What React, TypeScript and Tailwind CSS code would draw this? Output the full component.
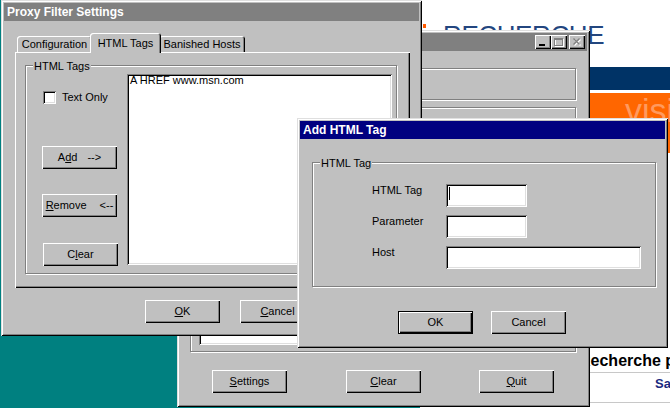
import React from "react";

// win95 bevels
const win =
  "bg-[#c0c0c0] shadow-[inset_1px_1px_#dfdfdf,inset_-1px_-1px_#000,inset_2px_2px_#fff,inset_-2px_-2px_#808080]";
const raised =
  "bg-[#c0c0c0] shadow-[inset_1px_1px_#fff,inset_-1px_-1px_#000,inset_-2px_-2px_#808080]";
const defaultBtn =
  "border border-black bg-[#c0c0c0] shadow-[inset_1px_1px_#fff,inset_-1px_-1px_#000,inset_-2px_-2px_#808080]";
const sunken =
  "bg-white shadow-[inset_1px_1px_#808080,inset_-1px_-1px_#fff,inset_2px_2px_#000,inset_-2px_-2px_#dfdfdf]";
const etched = "border border-[#808080] shadow-[inset_1px_1px_#fff,1px_1px_#fff]";

function U({ children }: { children: React.ReactNode }) {
  return <span className="underline decoration-1 underline-offset-[1px]">{children}</span>;
}

function Button({
  children,
  primary = false,
  className = "",
}: {
  children: React.ReactNode;
  primary?: boolean;
  className?: string;
}) {
  return (
    <div
      className={`flex h-[23px] w-[75px] shrink-0 items-center justify-center whitespace-pre text-[11px] leading-[13px] ${
        primary ? defaultBtn : raised
      } ${className}`}
    >
      {children}
    </div>
  );
}

function TitleBar({
  title,
  active = false,
  children,
}: {
  title: string;
  active?: boolean;
  children?: React.ReactNode;
}) {
  return (
    <div
      className={`flex h-[18px] items-center justify-between pl-[3px] pr-[2px] ${
        active ? "bg-[#000080]" : "bg-[#808080]"
      }`}
    >
      <span className="text-[12px] font-bold leading-[14px] text-white">{title}</span>
      {children}
    </div>
  );
}

function GroupBox({
  label,
  className = "",
  children,
}: {
  label: string;
  className?: string;
  children?: React.ReactNode;
}) {
  return (
    <div className={`relative ${etched} ${className}`}>
      <span className="absolute left-[7px] top-[-6px] bg-[#c0c0c0] px-[1px] text-[11px] leading-[13px]">
        {label}
      </span>
      {children}
    </div>
  );
}

function Tab({
  children,
  selected = false,
  className = "",
}: {
  children: React.ReactNode;
  selected?: boolean;
  className?: string;
}) {
  return (
    <div
      className={`flex items-center justify-center rounded-t-[3px] bg-[#c0c0c0] text-[11px] leading-[13px] shadow-[inset_1px_1px_#fff,inset_-1px_0_#000,inset_-2px_0_#808080] ${
        selected ? "relative z-10 -mx-[2px] -mb-[1px] h-[20px]" : "h-[16px]"
      } ${className}`}
    >
      {children}
    </div>
  );
}

function FieldRow({ label, width, cursor = false }: { label: string; width: string; cursor?: boolean }) {
  return (
    <div className="flex items-start">
      <span className="w-[74px] text-[11px] leading-[13px]">{label}</span>
      <div className={`flex h-[23px] items-start pl-[3px] pt-[3px] ${width} ${sunken}`}>
        {cursor && <span className="h-[13px] w-px bg-black" />}
      </div>
    </div>
  );
}

function CaptionButtons() {
  return (
    <div className="flex items-center">
      <div className={`flex h-[14px] w-[16px] items-end pb-[3px] pl-[4px] ${raised}`}>
        <span className="h-[2px] w-[6px] bg-black" />
      </div>
      <div className={`flex h-[14px] w-[16px] items-center justify-center ${raised}`}>
        <svg width="10" height="9" viewBox="0 0 10 9">
          <rect x="1.5" y="1.5" width="8" height="7" fill="none" stroke="#fff" />
          <rect x="0.5" y="0.5" width="8" height="7" fill="none" stroke="#808080" />
          <rect x="0" y="0" width="9" height="2" fill="#808080" />
        </svg>
      </div>
      <div className={`ml-[2px] flex h-[14px] w-[16px] items-center justify-center ${raised}`}>
        <svg width="9" height="8" viewBox="0 0 9 8">
          <path d="M1.5 1.5 L7.5 7.5 M7.5 1.5 L1.5 7.5" stroke="#fff" strokeWidth="1.4" />
          <path d="M0.5 0.5 L6.5 6.5 M6.5 0.5 L0.5 6.5" stroke="#808080" strokeWidth="1.4" />
        </svg>
      </div>
    </div>
  );
}

function WebPage() {
  return (
    <div className="absolute left-[420px] top-0 flex h-[408px] w-[250px] flex-col overflow-hidden bg-white">
      <div className="flex h-[67px] items-start pl-[3px] pt-[22px]">
        <span className="mt-[2px] h-[4px] w-[3px] bg-[#ff5a00]" />
        <span className="ml-[17px] whitespace-nowrap text-[26px] leading-none tracking-[-0.4px] text-[#23467f]">
          RECHERCHE
        </span>
      </div>
      <div className="h-[23px] bg-[#003366]" />
      <div className="h-[3px]" />
      <div className="h-[60px] overflow-hidden whitespace-nowrap bg-[#ff6600] pl-[205px] text-[34px] leading-none text-[#ff9a5e]">
        visitez
      </div>
      <div className="mt-auto h-[57px] whitespace-nowrap pl-[159px]">
        <div className="h-[22px] border-b border-[#c8c8c8] text-[16px] font-bold leading-[20px] text-black">
          Recherche par mot-clé
        </div>
        <div className="h-[30px] border-b border-[#c8c8c8] pl-[76px] pt-[3px] text-[13px] font-bold leading-[16px] text-[#1a2a80]">
          Saisissez
        </div>
      </div>
    </div>
  );
}

function BackWindow() {
  return (
    <div className={`absolute left-[177px] top-[30px] h-[377px] w-[413px] p-[3px] ${win}`}>
      <TitleBar title="">
        <CaptionButtons />
      </TitleBar>
      <div className="pl-[10px] pr-[11px] pt-[17px]">
        <div className={`h-[32px] ${etched}`} />
        <div className={`mt-[7px] flex h-[245px] flex-col justify-end pb-[6px] pl-[8px] pr-[7px] ${etched}`}>
          <div className={`h-[190px] ${sunken}`} />
        </div>
        <div className="mt-[18px] flex pl-[22px]">
          <Button>
            <U>S</U>ettings
          </Button>
          <Button className="ml-[59px]">
            <U>C</U>lear
          </Button>
          <Button className="ml-[58px]">
            <U>Q</U>uit
          </Button>
        </div>
      </div>
    </div>
  );
}

function ProxySettings() {
  return (
    <div className={`absolute left-[1px] top-0 h-[336px] w-[421px] p-[3px] ${win}`}>
      <TitleBar title="Proxy Filter Settings" />
      <div className="pl-[11px] pt-[12px]">
        <div className="flex h-[19px] items-end pl-[2px]">
          <Tab className="w-[75px]">Configuration</Tab>
          <Tab selected className="w-[71px]">
            HTML Tags
          </Tab>
          <Tab className="w-[86px]">Banished Hosts</Tab>
        </div>
        <div className={`h-[236px] w-[395px] pl-[10px] pt-[13px] ${raised}`}>
          <GroupBox label="HTML Tags" className="flex h-[209px] w-[372px] pt-[8px]">
            <div className="flex w-[101px] shrink-0 flex-col items-start pl-[16px]">
              <div className="ml-[1px] mt-[17px] flex h-[13px] items-center">
                <span className={`h-[13px] w-[13px] ${sunken}`} />
                <span className="ml-[6px] text-[11px] leading-[13px]">Text Only</span>
              </div>
              <Button className="mt-[42px]">
                <span>
                  A<U>d</U>d
                </span>
                <span className="ml-[10px]">--&gt;</span>
              </Button>
              <Button className="mt-[25px]">
                <span>
                  <U>R</U>emove
                </span>
                <span className="ml-[13px]">&lt;--</span>
              </Button>
              <Button className="ml-[1px] mt-[26px]">
                C<U>l</U>ear
              </Button>
            </div>
            <div className={`h-[191px] w-[265px] px-[3px] text-[11px] leading-[13px] ${sunken}`}>
              A HREF www.msn.com
            </div>
          </GroupBox>
        </div>
        <div className="mt-[12px] flex gap-[20px] pl-[130px]">
          <Button>
            <U>O</U>K
          </Button>
          <Button>
            <U>C</U>ancel
          </Button>
        </div>
      </div>
    </div>
  );
}

function AddTagDialog() {
  return (
    <div className={`absolute left-[297px] top-[118px] h-[230px] w-[371px] p-[3px] ${win}`}>
      <TitleBar title="Add HTML Tag" active />
      <div className="pl-[12px] pt-[23px]">
        <GroupBox label="HTML Tag" className="h-[125px] w-[344px] pl-[59px] pt-[21px]">
          <div className="flex flex-col gap-[8px]">
            <FieldRow label="HTML Tag" width="w-[81px]" cursor />
            <FieldRow label="Parameter" width="w-[81px]" />
            <FieldRow label="Host" width="w-[195px]" />
          </div>
        </GroupBox>
        <div className="mt-[24px] flex gap-[18px] pl-[86px]">
          <Button primary>OK</Button>
          <Button>Cancel</Button>
        </div>
      </div>
    </div>
  );
}

export default function App() {
  return (
    <div className="relative h-[408px] w-[670px] overflow-hidden bg-[#008080] font-['Liberation_Sans',Arial,sans-serif] text-black">
      <WebPage />
      <BackWindow />
      <ProxySettings />
      <AddTagDialog />
    </div>
  );
}
